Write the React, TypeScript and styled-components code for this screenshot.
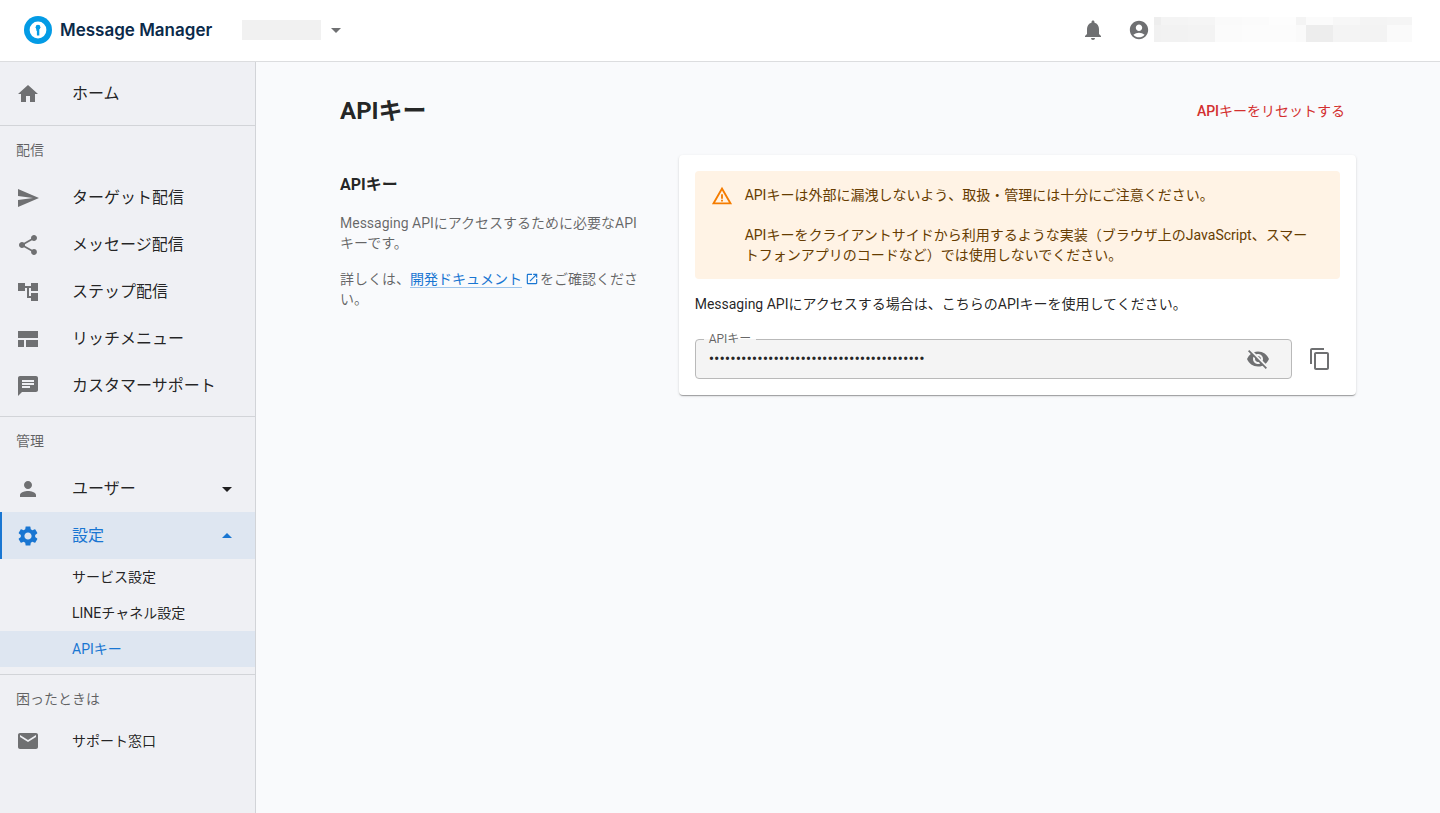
import React, { useState } from 'react';
import styled, { createGlobalStyle, css } from 'styled-components';
import {
  MdAccountCircle,
  MdAccountTree,
  MdArrowDropDown,
  MdArrowDropUp,
  MdChat,
  MdContentCopy,
  MdEmail,
  MdHome,
  MdNotifications,
  MdOpenInNew,
  MdPerson,
  MdSend,
  MdSettings,
  MdShare,
  MdVisibility,
  MdVisibilityOff,
  MdWarningAmber,
} from 'react-icons/md';

const color = {
  text: 'rgba(0, 0, 0, 0.87)',
  muted: 'rgba(0, 0, 0, 0.6)',
  icon: '#6f7072',
  primary: '#1976d2',
  danger: '#d32f2f',
  line: '#d2d4d8',
};

const GlobalStyle = createGlobalStyle`
  *, *::before, *::after { box-sizing: border-box; }
  body {
    margin: 0;
    background: #f9fafc;
    color: ${color.text};
    font-family: Roboto, "Noto Sans CJK JP", sans-serif;
    font-size: 14px;
    line-height: 20px;
  }
  button, input { font: inherit; color: inherit; }
  h1, h2, p, ul { margin: 0; padding: 0; }
  ul { list-style: none; }
`;

const Page = styled.div`
  display: flex;
  flex-direction: column;
  min-height: 100vh;
`;

const Header = styled.header`
  display: flex;
  align-items: center;
  height: 62px;
  padding: 0 28px 2px 24px;
  background: #fff;
  border-bottom: 1px solid #dcdddf;
`;

const Brand = styled.a`
  display: flex;
  align-items: center;
  gap: 8px;
  color: #0b2a4a;
  font-family: Inter, sans-serif;
  font-size: 17px;
  font-weight: 600;
  line-height: 28px;
  text-decoration: none;
`;

const PlainButton = styled.button`
  display: inline-flex;
  align-items: center;
  justify-content: center;
  padding: 0;
  border: 0;
  background: none;
  color: ${color.icon};
  cursor: pointer;
`;

const ServiceButton = styled(PlainButton)`
  gap: 3px;
  margin-left: 30px;
`;

const ServiceName = styled.span`
  width: 79px;
  height: 20px;
  background: #f1f1f1;
`;

const HeaderActions = styled.div`
  display: flex;
  align-items: center;
  gap: 23px;
  margin-left: auto;
`;

const AccountButton = styled(PlainButton)`
  gap: 4px;
`;

const Body = styled.div`
  display: flex;
  flex: 1;
`;

const Sidebar = styled.nav`
  flex: 0 0 256px;
  background: #eff0f4;
  border-right: 1px solid ${color.line};
`;

const Section = styled.section`
  padding-bottom: 7px;

  &:first-child { padding: 8px 0; }
  & + & { border-top: 1px solid ${color.line}; }
`;

const SectionLabel = styled.h2`
  padding: 0 16px;
  color: ${color.muted};
  font-size: 14px;
  font-weight: 400;
  line-height: 48px;
`;

const itemStyle = css<{ $active?: boolean; $small?: boolean }>`
  display: flex;
  align-items: center;
  gap: 32px;
  width: 100%;
  height: ${(p) => (p.$small ? 36 : 47)}px;
  padding: 0 16px;
  border: 0;
  background: ${(p) => (p.$active ? '#dee6f1' : 'transparent')};
  color: ${(p) => (p.$active ? color.primary : color.text)};
  font-size: ${(p) => (p.$small ? 14 : 16)}px;
  text-align: left;
  text-decoration: none;
  cursor: pointer;

  > svg:first-child {
    flex: none;
    color: ${(p) => (p.$active ? color.primary : color.icon)};
  }
`;

const NavLink = styled.a<{ $active?: boolean; $small?: boolean }>`
  ${itemStyle}
`;

const NavToggle = styled.button<{ $active?: boolean }>`
  ${itemStyle}
  box-shadow: ${(p) => (p.$active ? `inset 2px 0 ${color.primary}` : 'none')};

  > svg:last-child { margin-left: auto; }
`;

const SubLink = styled(NavLink)`
  padding-left: 72px;
`;

const Main = styled.main`
  flex: 1;
  min-width: 0;
  padding: 31px 24px;
`;

const Content = styled.div`
  max-width: 1016px;
  margin: 0 auto;
`;

const TitleRow = styled.div`
  display: flex;
  align-items: center;
  justify-content: space-between;
  margin-bottom: 26px;
`;

const Title = styled.h1`
  font-size: 24px;
  font-weight: 700;
  line-height: 36px;
`;

const ResetButton = styled.button`
  min-width: 170px;
  padding: 8px;
  border: 0;
  border-radius: 4px;
  background: none;
  color: ${color.danger};
  cursor: pointer;

  b { font-weight: 500; }
`;

const Columns = styled.div`
  display: grid;
  grid-template-columns: 1fr 2fr;
  align-items: start;
`;

const Intro = styled.div`
  display: grid;
  gap: 16px;
  padding: 18px 32px 0 0;
  color: ${color.muted};
`;

const IntroTitle = styled.h2`
  color: ${color.text};
  font-size: 16px;
  font-weight: 700;
  line-height: 24px;
`;

const DocLink = styled.a`
  color: ${color.primary};
  text-decoration: none;

  span { border-bottom: 1px solid rgba(25, 118, 210, 0.4); }
  svg { margin: 0 1px 0 3px; vertical-align: -2px; }
`;

const Card = styled.section`
  display: flex;
  flex-direction: column;
  padding: 16px;
  background: #fff;
  border-radius: 4px;
  box-shadow: 0 2px 1px -1px rgba(0, 0, 0, 0.2), 0 1px 1px rgba(0, 0, 0, 0.14),
    0 1px 3px rgba(0, 0, 0, 0.12);
`;

const Alert = styled.div`
  display: flex;
  gap: 12px;
  padding: 14px 20px 14px 16px;
  border-radius: 4px;
  background: #fff3e5;
  color: #663c00;

  svg { flex: none; color: #f57c00; }
`;

const AlertText = styled.div`
  display: grid;
  gap: 20px;
`;

const Usage = styled.p`
  margin: 15px 0 25px;
`;

const KeyRow = styled.div`
  display: flex;
  align-items: center;
  gap: 8px;
`;

const Field = styled.div`
  position: relative;
  display: flex;
  flex: 1;
  height: 40px;
  padding: 0 13px;
  border: 1px solid #b9b9b9;
  border-radius: 4px;
  background: #f4f4f4;
`;

const FieldLabel = styled.label`
  position: absolute;
  top: -9px;
  left: 8px;
  padding: 0 5px;
  background: linear-gradient(#fff 50%, #f4f4f4 50%);
  color: ${color.muted};
  font-size: 12px;
  line-height: 16px;
`;

const KeyInput = styled.input`
  flex: 1;
  min-width: 0;
  padding: 0;
  border: 0;
  outline: 0;
  background: none;
  font-size: 16px;
`;

const IconButton = styled(PlainButton)`
  width: 40px;
  height: 38px;
`;

const LogoMark = () => (
  <svg width="28" height="28" viewBox="0 0 28 28" aria-hidden="true">
    <circle cx="14" cy="14" r="14" fill="#039be5" />
    <circle cx="14" cy="14" r="8.4" fill="#fff" />
    <circle cx="14" cy="11.2" r="2.4" fill="#039be5" />
    <path d="M12.3 12.6h3v6.9h-2.4v-4.8h-.6z" fill="#039be5" />
  </svg>
);

const RichMenuIcon = () => (
  <svg width="24" height="24" viewBox="0 0 24 24" fill="currentColor" aria-hidden="true">
    <path d="M2 4h20v7H2zM2 13h6v7H2zM10 13h12v7H10z" />
  </svg>
);

const mosaic: [number, number, string, string][] = [
  [0, 7, '#eeeeee', '#f1f1f1'],
  [7, 27, '#f4f4f4', '#f2f2f2'],
  [34, 27, '#f5f5f5', '#f3f3f3'],
  [61, 27, '#fafafa', '#fbfbfb'],
  [88, 27, '#fbfbfb', '#fcfcfc'],
  [115, 27, '#fdfdfd', '#fcfcfc'],
  [142, 10, '#f4f4f4', '#fafafa'],
  [152, 27, '#fbfbfb', '#ededed'],
  [179, 27, '#f7f7f7', '#f4f4f4'],
  [206, 27, '#f4f4f4', '#f3f3f3'],
  [233, 25, '#f5f5f5', '#fafafa'],
];

const MaskedAccount = () => (
  <svg width="258" height="25" viewBox="0 0 258 25" aria-hidden="true">
    {mosaic.map(([x, width, top, bottom]) => (
      <g key={x}>
        <rect x={x} width={width} height="8" fill={top} />
        <rect x={x} y="8" width={width} height="17" fill={bottom} />
      </g>
    ))}
  </svg>
);

const deliveryItems = [
  { label: 'ターゲット配信', icon: <MdSend size={24} /> },
  { label: 'メッセージ配信', icon: <MdShare size={24} /> },
  { label: 'ステップ配信', icon: <MdAccountTree size={24} /> },
  { label: 'リッチメニュー', icon: <RichMenuIcon /> },
  { label: 'カスタマーサポート', icon: <MdChat size={24} /> },
];

const settingItems = ['サービス設定', 'LINEチャネル設定', 'APIキー'];

export default function App() {
  const [visible, setVisible] = useState(false);
  const [apiKey] = useState('0123456789abcdef0123456789abcdef01234567');

  return (
    <Page>
      <GlobalStyle />
      <Header>
        <Brand href="#">
          <LogoMark />
          Message Manager
        </Brand>
        <ServiceButton type="button" aria-label="サービスを選択">
          <ServiceName />
          <MdArrowDropDown size={24} />
        </ServiceButton>
        <HeaderActions>
          <PlainButton type="button" aria-label="通知">
            <MdNotifications size={24} />
          </PlainButton>
          <AccountButton type="button" aria-label="アカウント">
            <MdAccountCircle size={22} />
            <MaskedAccount />
          </AccountButton>
        </HeaderActions>
      </Header>

      <Body>
        <Sidebar>
          <Section>
            <NavLink href="#">
              <MdHome size={24} />
              ホーム
            </NavLink>
          </Section>
          <Section>
            <SectionLabel>配信</SectionLabel>
            <ul>
              {deliveryItems.map(({ label, icon }) => (
                <li key={label}>
                  <NavLink href="#">
                    {icon}
                    {label}
                  </NavLink>
                </li>
              ))}
            </ul>
          </Section>
          <Section>
            <SectionLabel>管理</SectionLabel>
            <NavToggle type="button" aria-expanded={false}>
              <MdPerson size={24} />
              ユーザー
              <MdArrowDropDown size={24} />
            </NavToggle>
            <NavToggle type="button" aria-expanded $active>
              <MdSettings size={24} />
              設定
              <MdArrowDropUp size={24} />
            </NavToggle>
            <ul>
              {settingItems.map((label) => (
                <li key={label}>
                  <SubLink href="#" $small $active={label === 'APIキー'}>
                    {label}
                  </SubLink>
                </li>
              ))}
            </ul>
          </Section>
          <Section>
            <SectionLabel>困ったときは</SectionLabel>
            <NavLink href="#" $small>
              <MdEmail size={24} />
              サポート窓口
            </NavLink>
          </Section>
        </Sidebar>

        <Main>
          <Content>
            <TitleRow>
              <Title>APIキー</Title>
              <ResetButton type="button">
                <b>API</b>キーをリセットする
              </ResetButton>
            </TitleRow>
            <Columns>
              <Intro>
                <IntroTitle>APIキー</IntroTitle>
                <p>Messaging APIにアクセスするために必要なAPIキーです。</p>
                <p>
                  詳しくは、
                  <DocLink href="#">
                    <span>開発ドキュメント</span>
                    <MdOpenInNew size={14} />
                  </DocLink>
                  をご確認ください。
                </p>
              </Intro>
              <Card>
                <Alert role="alert">
                  <MdWarningAmber size={22} />
                  <AlertText>
                    <p>APIキーは外部に漏洩しないよう、取扱・管理には十分にご注意ください。</p>
                    <p>
                      APIキーをクライアントサイドから利用するような実装（ブラウザ上のJavaScript、スマートフォンアプリのコードなど）では使用しないでください。
                    </p>
                  </AlertText>
                </Alert>
                <Usage>Messaging APIにアクセスする場合は、こちらのAPIキーを使用してください。</Usage>
                <KeyRow>
                  <Field>
                    <FieldLabel htmlFor="api-key">APIキー</FieldLabel>
                    <KeyInput
                      id="api-key"
                      type={visible ? 'text' : 'password'}
                      value={apiKey}
                      readOnly
                    />
                    <IconButton
                      type="button"
                      aria-label="APIキーの表示を切り替える"
                      onClick={() => setVisible(!visible)}
                    >
                      {visible ? <MdVisibility size={24} /> : <MdVisibilityOff size={24} />}
                    </IconButton>
                  </Field>
                  <IconButton type="button" aria-label="APIキーをコピー">
                    <MdContentCopy size={24} />
                  </IconButton>
                </KeyRow>
              </Card>
            </Columns>
          </Content>
        </Main>
      </Body>
    </Page>
  );
}
